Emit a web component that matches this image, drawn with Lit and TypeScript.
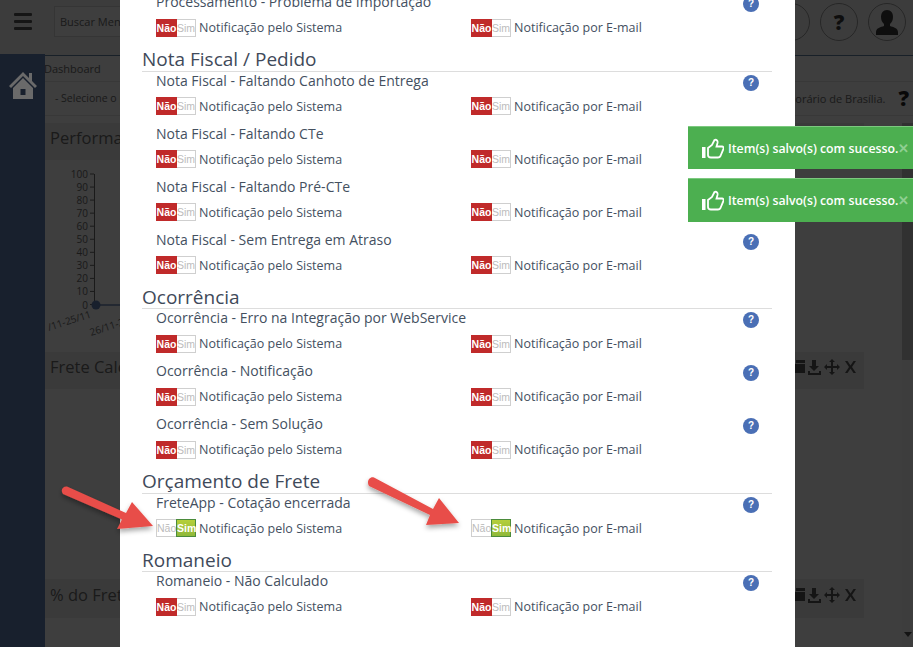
import { LitElement, html, css, svg } from "lit";
import { customElement } from "lit/decorators.js";

type Item = { title: string; on?: boolean };
type Group = { heading?: string; items: Item[] };

const groups: Group[] = [
  { items: [{ title: "Processamento - Problema de Importação" }] },
  {
    heading: "Nota Fiscal / Pedido",
    items: [
      { title: "Nota Fiscal - Faltando Canhoto de Entrega" },
      { title: "Nota Fiscal - Faltando CTe" },
      { title: "Nota Fiscal - Faltando Pré-CTe" },
      { title: "Nota Fiscal - Sem Entrega em Atraso" },
    ],
  },
  {
    heading: "Ocorrência",
    items: [
      { title: "Ocorrência - Erro na Integração por WebService" },
      { title: "Ocorrência - Notificação" },
      { title: "Ocorrência - Sem Solução" },
    ],
  },
  { heading: "Orçamento de Frete", items: [{ title: "FreteApp - Cotação encerrada", on: true }] },
  { heading: "Romaneio", items: [{ title: "Romaneio - Não Calculado" }] },
];

const ticks = [100, 90, 80, 70, 60, 50, 40, 30, 20, 10, 0];

@customElement("app-root")
export class AppRoot extends LitElement {
  static styles = css`
    :host {
      display: block;
      position: relative;
      width: 913px;
      height: 647px;
      overflow: hidden;
      font-family: "Open Sans", "Liberation Sans", sans-serif;
      background: #f5f5f5;
      color: #6a6a6a;
    }
    .page { display: flex; flex-direction: column; height: 647px; }
    .top { display: flex; align-items: center; height: 56px; flex: none; background: #f0f0f0; border-bottom: 1px solid #60809f; box-sizing: border-box; padding: 0 7px 12px 14px; }
    .burger { display: flex; flex-direction: column; gap: 4px; width: 18px; margin-right: 22px; }
    .burger i { display: block; height: 3px; background: #555; border-radius: 1px; }
    .search { width: 200px; height: 31px; box-sizing: border-box; border: 1px solid #d4d4d4; background: #f6f6f6; font-size: 11px; line-height: 29px; padding-left: 5px; }
    .spacer { flex: 1; }
    .circle { width: 38px; height: 38px; box-sizing: border-box; border: 1px solid #999; border-radius: 50%; margin-left: 10px; display: flex; align-items: center; justify-content: center; font-weight: 800; font-size: 21px; color: #3a3a3a; overflow: hidden; }
    .body { display: flex; flex: 1; min-height: 0; }
    .side { width: 45px; flex: none; background: #18202d; position: relative; z-index: 1; margin-top: -2px; display: flex; justify-content: center; align-items: flex-start; padding-top: 17px; box-sizing: border-box; }
    .side svg { width: 28px; height: 28px; }
    .main { flex: 1; display: flex; flex-direction: column; min-width: 0; }
    .crumb { height: 26px; font-size: 11px; line-height: 26px; border-bottom: 1px solid #e0e0e0; box-sizing: border-box; text-indent: -1px; }
    .select { height: 34px; border-bottom: 1px solid #e0e0e0; box-sizing: border-box; font-size: 10.5px; line-height: 33px; padding-left: 10px; display: flex; align-items: center; padding-right: 4px; }
    .select .tz { margin-left: auto; font-size: 11px; margin-right: 13px; }
    .select b { font-size: 21px; color: #222; font-weight: 800; }
    .content { padding-top: 7px; padding-right: 49px; }
    .band { height: 37px; box-sizing: border-box; display: flex; align-items: center; padding: 0 0 8px 5px; font-size: 16.5px; background: #e6e6e6; }
    .band svg { margin-left: auto; margin-right: 1px; width: 70px; height: 16px; }
    .band.tall { height: 39px; }
    .chart { height: 192px; }
    .chart svg { display: block; width: 120px; height: 192px; }
    .gap { height: 190px; }
    .scroll { position: absolute; right: 0; top: 123px; bottom: 0; width: 11px; background: #f1f1f1; }
    .scroll i { display: block; height: 237px; background: #c4c4c4; }
    .scroll s { position: absolute; bottom: 10px; left: 2px; border: 4px solid transparent; border-top: 5px solid #505050; border-bottom: 0; }
    .overlay { position: absolute; inset: 0; background: rgba(0, 0, 0, 0.75); }

    .modal { position: absolute; z-index: 2; left: 120px; top: 0; width: 675px; height: 647px; background: #fff; overflow: hidden; box-sizing: border-box; padding: 0 23px 0 22px; color: #44505f; }
    .list { margin-top: -7px; }
    h3 { margin: 0 0 1px; height: 24.5px; line-height: 27px; font-size: 19px; font-weight: 400; color: #3f4a5a; box-shadow: 0 1px 0 #ddd; white-space: nowrap; }
    .item { height: 53px; padding: 0 13px 0 14px; box-sizing: border-box; }
    .title { height: 19px; line-height: 17px; font-size: 14px; display: flex; justify-content: space-between; align-items: flex-start; margin-bottom: 6px; }
    .help { width: 16px; height: 16px; border-radius: 50%; background: #4a6fb5; color: #fff; font: bold 10px/16px "Liberation Sans", sans-serif; text-align: center; flex: none; margin-top: 3px; }
    .opts { display: flex; font-size: 12.5px; }
    .opt { width: 315px; flex: none; display: flex; align-items: center; gap: 3px; height: 19px; line-height: 19px; white-space: nowrap; }
    .tg { display: flex; width: 40px; height: 18px; font: 10.5px/18px "Liberation Sans", sans-serif; box-sizing: border-box; }
    .tg span { display: block; text-align: center; box-sizing: border-box; }
    .tg .no { width: 21px; }
    .tg .yes { width: 19px; }
    .tg .red { background: #c02a2a; color: #fff; font-weight: 700; line-height: 18px; }
    .tg .green { background: linear-gradient(#b5cf3a, #8fb83a); border: 1px solid #4b8b3b; color: #fff; font-weight: 700; line-height: 16px; width: 20px; }
    .tg .off { background: #fff; color: #bcbcbc; border: 1px solid #cfcfcf; line-height: 16px; }
    .tg .off.yes { border-left: 0; }
    .tg .off.no { border-right: 0; width: 20px; }

    .toasts { position: absolute; z-index: 3; top: 126px; left: 688px; width: 225px; display: flex; flex-direction: column; gap: 9px; }
    .toast { height: 43px; box-sizing: border-box; background: #4caf50; border-top: 1px solid #7cc97f; display: flex; align-items: center; padding-left: 14px; color: #fff; font-size: 12.3px; font-weight: 600; white-space: nowrap; gap: 4px; }
    .toast:last-child { height: 44px; }
    .toast svg { width: 22px; height: 21px; flex: none; }
    .toast em { font-style: normal; color: #8fcf92; font-weight: 800; font-size: 12.5px; margin-left: -4px; }

    .arrows { position: absolute; z-index: 4; left: 0; top: 0; width: 913px; height: 647px; pointer-events: none; overflow: visible; }
  `;

  private toggle(on?: boolean) {
    return html`<div class="tg">
      <span class="no ${on ? "off" : "red"}">Não</span>
      <span class="yes ${on ? "green" : "off"}">Sim</span>
    </div>`;
  }

  private icons() {
    return html`<svg viewBox="0 0 70 16" fill="#555">
      <path d="M1 5h11v9H1z M3 1h9v3H3z" />
      <path d="M19 1h4v6h3l-5 5-5-5h3z M15 12h2v2h9v-2h2v4H15z" />
      <path d="M39 0l3 3h-2v4h4V5l3 3-3 3V9h-4v4h2l-3 3-3-3h2V9h-4v2l-3-3 3-3v2h4V3h-2z" />
      <path d="M52 2h2.5l3 4.5 3-4.5H63l-4 6 4 6h-2.5l-3-4.5-3 4.5H52l4-6z" />
    </svg>`;
  }

  private chart() {
    return html`<svg viewBox="0 0 120 192">
      ${ticks.map((t, i) => {
        const y = 14 + i * 13.05;
        return svg`<text x="43" y="${y + 4}" text-anchor="end" font-size="10" fill="#6a6a6a">${t}</text>
          <line x1="45" x2="49" y1="${y}" y2="${y}" stroke="#6a6a6a" />`;
      })}
      <line x1="49.5" x2="49.5" y1="14" y2="145" stroke="#6a6a6a" />
      <line x1="49" x2="120" y1="145" y2="145" stroke="#6a80b0" stroke-width="1.5" />
      <circle cx="51" cy="145" r="4.5" fill="#6080b4" />
      <text transform="translate(4 171) rotate(-18)" font-size="10" fill="#6a6a6a">/11-25/11</text>
      <text transform="translate(46 176) rotate(-18)" font-size="10" fill="#6a6a6a">26/11-26/11</text>
    </svg>`;
  }

  render() {
    return html`
      <div class="page">
        <div class="top">
          <div class="burger"><i></i><i></i><i></i></div>
          <div class="search">Buscar Menu</div>
          <div class="spacer"></div>
          <div class="circle"></div>
          <div class="circle">?</div>
          <div class="circle">
            <svg width="28" height="30" viewBox="0 0 28 30" fill="#3a3a3a"><path d="M14 3c4 0 6 3 6 7 0 3-1 5-3 7v2c3 1 8 2 8 6v3H3v-3c0-4 5-5 8-6v-2c-2-2-3-4-3-7 0-4 2-7 6-7z" /></svg>
          </div>
        </div>
        <div class="body">
          <div class="side">
            <svg viewBox="0 0 28 28" fill="#6a6a6a">
              <path d="M14 1L0 15l2 2L14 5l12 12 2-2-5-5V2h-3v5z" />
              <path d="M4 17L14 7l10 10v11H4zM11.500 18v6h5v-6z" fill-rule="evenodd" />
            </svg>
          </div>
          <div class="main">
            <div class="crumb">Dashboard</div>
            <div class="select"><span>- Selecione o período</span><span class="tz">Horário de Brasília.</span><b>?</b></div>
            <div class="content">
              <div class="band">Performance</div>
              <div class="chart">${this.chart()}</div>
              <div class="band">Frete Calculado ${this.icons()}</div>
              <div class="gap"></div>
              <div class="band tall">% do Frete ${this.icons()}</div>
            </div>
          </div>
        </div>
      </div>
      <div class="scroll"><i></i><s></s></div>
      <div class="overlay"></div>
      <div class="modal">
        <div class="list">
          ${groups.map(
            (g) => html`
              ${g.heading ? html`<h3>${g.heading}</h3>` : ""}
              ${g.items.map(
                (it) => html`<div class="item">
                  <div class="title"><span>${it.title}</span><span class="help">?</span></div>
                  <div class="opts">
                    <div class="opt">${this.toggle(it.on)}<span>Notificação pelo Sistema</span></div>
                    <div class="opt">${this.toggle(it.on)}<span>Notificação por E-mail</span></div>
                  </div>
                </div>`
              )}
            `
          )}
        </div>
      </div>
      <div class="toasts">
        ${[0, 1].map(
          () => html`<div class="toast">
            <svg viewBox="0 0 22 21">
              <rect x="0" y="9" width="3.500" height="11" fill="#fff" />
              <path d="M6 10l4-3 2.500-5c2-1 3.500 1 3 3l-1 3.500h5.500c1.500 0 2 1.500 1.200 3l-2.700 6.500c-.5 1-1.500 1.500-2.500 1.500H9c-2 0-3-1-3-2.500z" fill="none" stroke="#fff" stroke-width="1.800" />
            </svg>
            <span>Item(s) salvo(s) com sucesso.</span><em>✕</em>
          </div>`
        )}
      </div>
      <svg class="arrows" viewBox="0 0 913 647">
        <defs>
          <filter id="sh" x="-30%" y="-30%" width="160%" height="160%">
            <feDropShadow dx="0" dy="3" stdDeviation="2.500" flood-color="#000" flood-opacity="0.35" />
          </filter>
        </defs>
        <g fill="#e84e48" filter="url(#sh)">
          <path d="M67 486.500L126 513L132 502L153 526L117 529L122 519.500L63 494C60 490 63 486 67 486.500z" />
          <path d="M374 477.500L433 509L439 498L459 523L426 525L430 515L369 486C366 481 370 476 374 477.500z" />
        </g>
      </svg>
    `;
  }
}
